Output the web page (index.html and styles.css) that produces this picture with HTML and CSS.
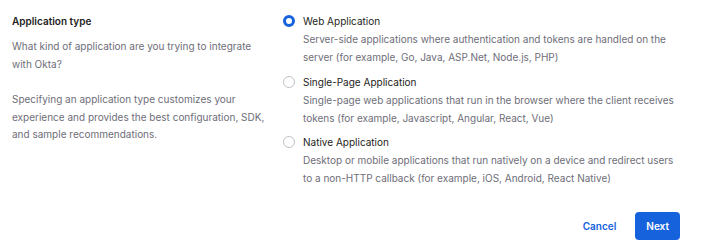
FILE: index.html
```html
<!DOCTYPE html>
<html lang="en">
<head>
  <meta charset="UTF-8">
  <title>Create a new app integration</title>
  <link rel="stylesheet" href="styles.css">
</head>
<body>
  <div class="form">
    <div class="row">
      <div class="intro">
        <h2 class="title">Application type</h2>
        <p class="hint">What kind of application are you trying to integrate with Okta?</p>
        <p class="hint">Specifying an application type customizes your experience and provides the best configuration, SDK, and sample recommendations.</p>
      </div>
      <div class="options">
        <label class="option">
          <input class="radio" type="radio" name="app-type" checked>
          <span class="option-text">
            <span class="option-name">Web Application</span>
            <span class="option-desc">Server-side applications where authentication and tokens are handled on the server (for example, Go, Java, ASP.Net, Node.js, PHP)</span>
          </span>
        </label>
        <label class="option">
          <input class="radio" type="radio" name="app-type">
          <span class="option-text">
            <span class="option-name">Single-Page Application</span>
            <span class="option-desc">Single-page web applications that run in the browser where the client receives tokens (for example, Javascript, Angular, React, Vue)</span>
          </span>
        </label>
        <label class="option">
          <input class="radio" type="radio" name="app-type">
          <span class="option-text">
            <span class="option-name">Native Application</span>
            <span class="option-desc">Desktop or mobile applications that run natively on a device and redirect users to a non-HTTP callback (for example, iOS, Android, React Native)</span>
          </span>
        </label>
      </div>
    </div>
    <div class="actions">
      <button class="link-button" type="button">Cancel</button>
      <button class="primary-button" type="submit">Next</button>
    </div>
  </div>
</body>
</html>
```

FILE: styles.css
```css
* {
  margin: 0;
  padding: 0;
  box-sizing: border-box;
  font-family: 'Inter', 'Liberation Sans', sans-serif;
}

body {
  background: #ffffff;
  color: #1d1d21;
  font-size: 10px;
  line-height: 18px;
}

.form {
  padding: 12px 12px 0 12px;
}

.row {
  display: flex;
}

.intro {
  width: 271px;
  padding-right: 15px;
  flex-shrink: 0;
}

.title {
  font-size: 10px;
  font-weight: 600;
  line-height: 18px;
  margin-bottom: 8px;
}

.hint {
  color: #6e6e78;
  line-height: 17.5px;
  margin-bottom: 18px;
}

.options {
  flex: 1;
  display: flex;
  flex-direction: column;
  gap: 6.5px;
}

.option {
  display: flex;
  gap: 8px;
  cursor: pointer;
}

.radio {
  appearance: none;
  width: 12px;
  height: 12px;
  margin-top: 3px;
  border: 1px solid #c1c1c8;
  border-radius: 50%;
  background: #ffffff;
  flex-shrink: 0;
}

.radio:checked {
  border: 3.5px solid #1662dd;
}

.option-text {
  display: flex;
  flex-direction: column;
  max-width: 380px;
}

.option-name {
  color: #1d1d21;
}

.option-desc {
  color: #6e6e78;
}

.actions {
  display: flex;
  justify-content: flex-end;
  align-items: center;
  gap: 19px;
  margin-top: 25px;
  padding-right: 15px;
}

.link-button {
  border: none;
  background: none;
  color: #1662dd;
  font-size: 10px;
  font-weight: 600;
  cursor: pointer;
}

.primary-button {
  border: none;
  border-radius: 4px;
  background: #1662dd;
  color: #ffffff;
  font-size: 10px;
  font-weight: 600;
  height: 28px;
  padding: 0 11px;
  cursor: pointer;
}
```
